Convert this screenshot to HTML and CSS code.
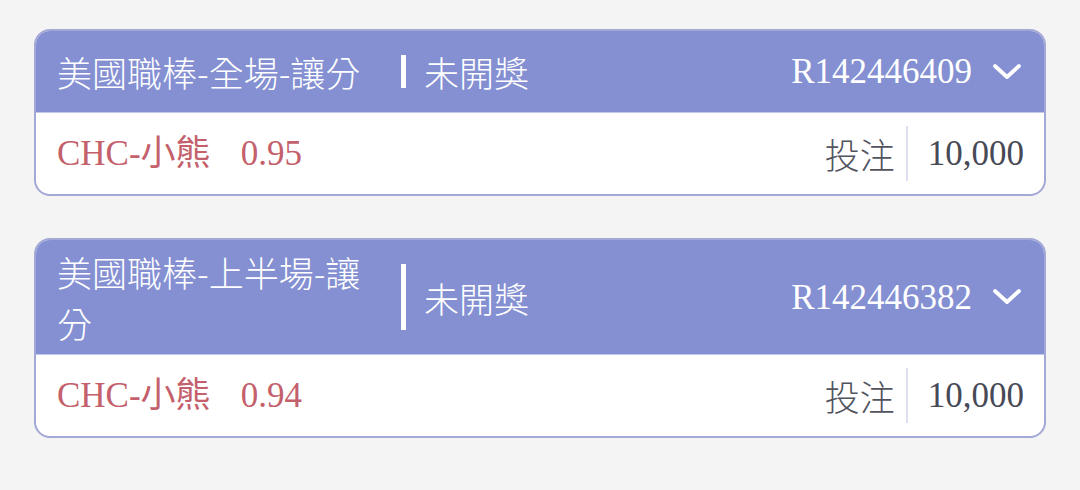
FILE: index.html
```html
<!DOCTYPE html>
<html lang="zh-Hant">
<head>
<meta charset="utf-8">
<title>注單</title>
<link rel="stylesheet" href="styles.css">
</head>
<body>
<main class="list">
  <section class="card">
    <header class="card-head">
      <div class="title">美國職棒-全場-讓分</div>
      <div class="status">未開獎</div>
      <div class="order">R142446409</div>
      <svg class="chevron" viewBox="0 0 30 18" width="30" height="18" aria-hidden="true"><path d="M3 3 L15 14 L27 3" fill="none" stroke="#fff" stroke-width="3.8" stroke-linecap="round" stroke-linejoin="round"/></svg>
    </header>
    <div class="card-body">
      <div class="pick">CHC-小熊<span class="odds">0.95</span></div>
      <div class="stake-label">投注</div>
      <div class="stake">10,000</div>
    </div>
  </section>
  <section class="card">
    <header class="card-head">
      <div class="title">美國職棒-上半場-讓分</div>
      <div class="status">未開獎</div>
      <div class="order">R142446382</div>
      <svg class="chevron" viewBox="0 0 30 18" width="30" height="18" aria-hidden="true"><path d="M3 3 L15 14 L27 3" fill="none" stroke="#fff" stroke-width="3.8" stroke-linecap="round" stroke-linejoin="round"/></svg>
    </header>
    <div class="card-body">
      <div class="pick">CHC-小熊<span class="odds">0.94</span></div>
      <div class="stake-label">投注</div>
      <div class="stake">10,000</div>
    </div>
  </section>
</main>
</body>
</html>
```
FILE: styles.css
```css
html, body {
  margin: 0;
  background: #f4f4f5;
}
body {
  font-family: "Noto Sans CJK TC", "Noto Sans", sans-serif;
  font-size: 35px;
  line-height: 51px;
}
.list {
  display: flex;
  flex-direction: column;
  gap: 42px;
  padding: 29px 34px;
}
.card {
  border: 2px solid #a3a8d4;
  border-radius: 16px;
  background: #fff;
  overflow: hidden;
}
.card-head {
  display: flex;
  align-items: center;
  box-sizing: border-box;
  min-height: 82px;
  padding: 6px 21px;
  background: #8490d2;
  color: #fff;
  border-bottom: 1px solid #c3c7ea;
}
.title {
  position: relative;
  flex: none;
  width: 320px;
  font-weight: 300;
}
.title::after {
  content: "";
  position: absolute;
  left: calc(100% + 24px);
  top: 18%;
  bottom: 18%;
  width: 5px;
  background: #fff;
}
.status {
  flex: 1;
  margin-left: 47px;
  font-weight: 300;
}
.order {
  font-family: "Liberation Serif", serif;
}
.chevron {
  flex: none;
  margin-left: 20px;
  margin-right: 1px;
}
.card-body {
  display: flex;
  align-items: center;
  height: 81px;
  padding: 0 20px 0 21px;
}
.pick {
  flex: 1;
  color: #c3606b;
  font-family: "Liberation Serif", "Noto Sans CJK TC", serif;
}
.odds {
  margin-left: 30px;
}
.stake-label {
  color: #51545e;
  font-weight: 300;
  padding-right: 11px;
  border-right: 2px solid #dcdff0;
  line-height: 55px;
}
.stake {
  color: #474a56;
  font-family: "Liberation Serif", serif;
  padding-left: 20px;
}
```
